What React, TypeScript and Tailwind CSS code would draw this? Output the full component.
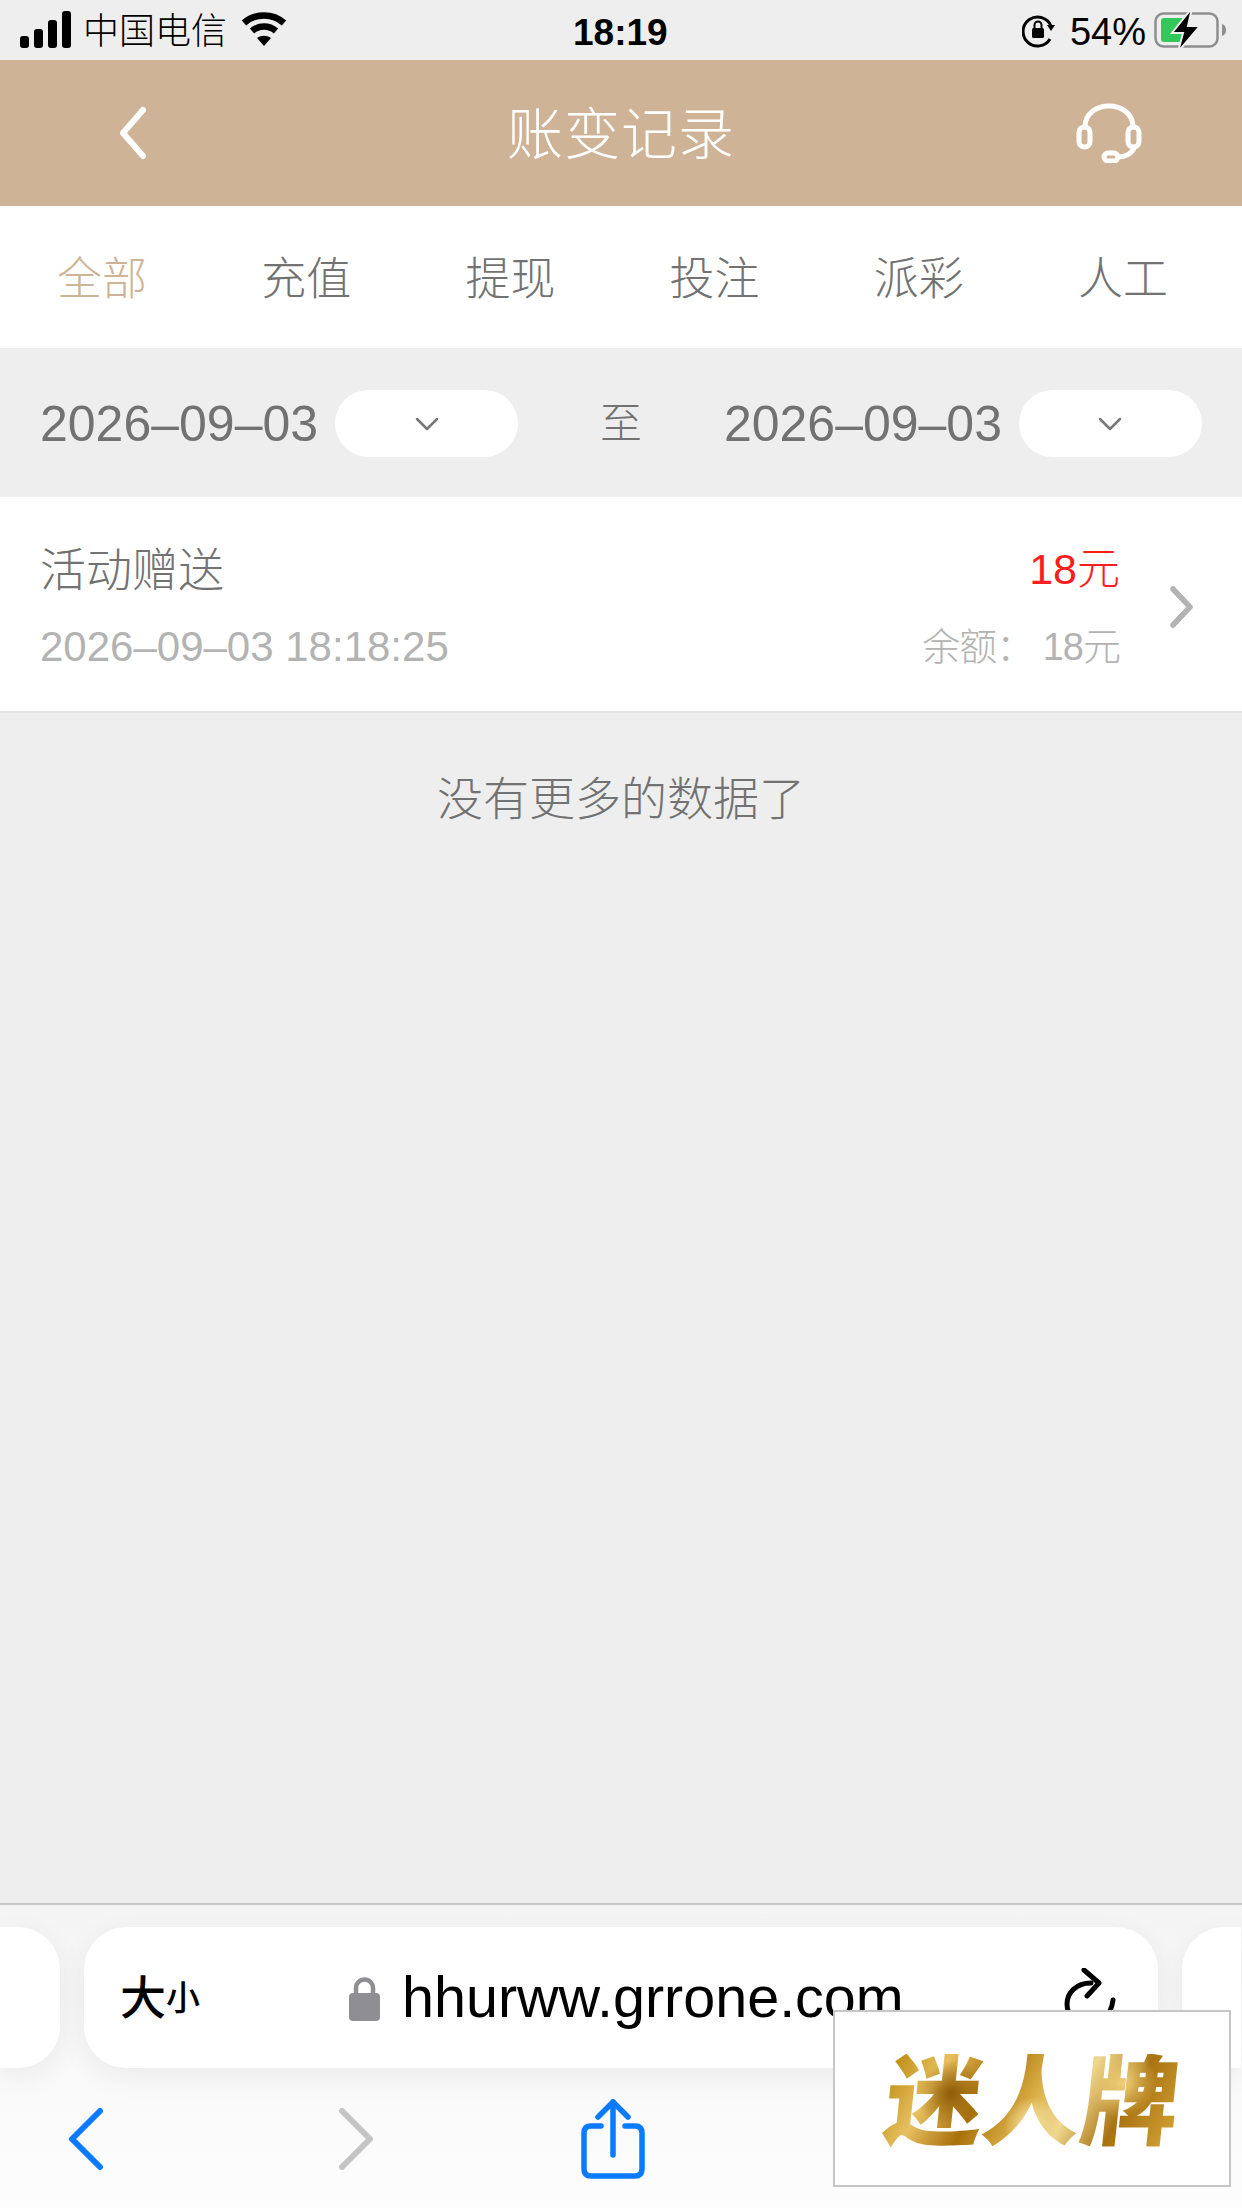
const tabs = ['全部', '充值', '提现', '投注', '派彩', '人工']

function Signal() {
  return (
    <svg width="52" height="40" viewBox="0 0 52 40" fill="#000">
      <rect x="0" y="26" width="9" height="12" rx="3" />
      <rect x="14" y="19" width="9" height="19" rx="3" />
      <rect x="28" y="10" width="9" height="28" rx="3" />
      <rect x="42" y="1" width="9" height="37" rx="3" />
    </svg>
  )
}

function Wifi() {
  return (
    <svg width="46" height="40" viewBox="0 0 46 40" fill="none" stroke="#000" strokeWidth="6.5">
      <path d="M3 13 C14 3 32 3 43 13" />
      <path d="M11 21 C18 15 28 15 35 21" />
      <path d="M23 36 L16 28 C20 25 26 25 30 28 Z" fill="#000" stroke="none" />
    </svg>
  )
}

function RotationLock() {
  return (
    <svg width="34" height="36" viewBox="0 0 34 36" fill="none" stroke="#000" strokeWidth="3">
      <path d="M29 14 A14.5 14.5 0 1 0 28 27" />
      <path d="M25 13 L33 13 L29 19 Z" fill="#000" stroke="none" />
      <rect x="10" y="16" width="12" height="10" rx="1.5" fill="#000" stroke="none" />
      <path d="M12.5 16 V13 A3.5 3.5 0 0 1 19.5 13 V16" strokeWidth="2" />
    </svg>
  )
}

function Battery() {
  return (
    <svg width="74" height="44" viewBox="0 0 74 44" fill="none">
      <rect x="1.5" y="5.5" width="62" height="33" rx="8" stroke="#8e8e8e" strokeWidth="2.5" />
      <path d="M68 16 C71 17 72 19 72 22 C72 25 71 27 68 28 Z" fill="#8e8e8e" />
      <path d="M7 13 Q7 10 10 10 H34 L26 34 H10 Q7 34 7 31 Z" fill="#34c759" />
      <path d="M38 0 L18 25 H29 L24 44 L46 18 H34 Z" fill="#000" stroke="#efefef" strokeWidth="2" />
    </svg>
  )
}

function Headset() {
  return (
    <svg width="66" height="60" viewBox="0 0 66 60" fill="none" stroke="#fff" strokeWidth="5" strokeLinecap="round">
      <path d="M9 24 C9 -4 57 -4 57 24" />
      <rect x="3" y="24" width="11" height="20" rx="5.5" />
      <rect x="52" y="24" width="11" height="20" rx="5.5" />
      <path d="M58 45 C56 50 50 54 42 54" />
      <rect x="28" y="50" width="14" height="8" rx="4" />
    </svg>
  )
}

function Chevron({ d, color, w, h, sw }: { d: string; color: string; w: number; h: number; sw: number }) {
  return (
    <svg width={w} height={h} viewBox={`0 0 ${w} ${h}`} fill="none" stroke={color} strokeWidth={sw} strokeLinecap="round" strokeLinejoin="round">
      <path d={d} />
    </svg>
  )
}

function DateSelect() {
  return (
    <div className="flex items-center gap-[17px]">
      <span className="text-[50px] leading-none text-[#727272]">2026–09–03</span>
      <div className="flex h-[67px] w-[183px] items-center justify-center rounded-[34px] bg-white">
        <Chevron d="M2 2 L12 12 L22 2" color="#777" w={24} h={14} sw={2.5} />
      </div>
    </div>
  )
}

export default function App() {
  return (
    <div className="relative flex h-[2208px] w-[1242px] flex-col overflow-hidden bg-[#eeeeee] font-['Liberation_Sans','Noto_Sans_CJK_SC',sans-serif]">
      {/* ios status bar */}
      <div className="relative flex h-[60px] items-center justify-between pl-[20px] pr-[14px] text-black">
        <div className="flex items-center">
          <Signal />
          <span className="ml-[11px] pt-[3px] text-[36px] font-light leading-none">中国电信</span>
          <span className="ml-[14px]"><Wifi /></span>
        </div>
        <span className="absolute left-[573px] top-[14px] text-[37px] font-bold leading-none">18:19</span>
        <div className="flex items-center">
          <RotationLock />
          <span className="ml-[14px] pt-[3px] text-[38px] leading-none">54%</span>
          <span className="ml-[8px]"><Battery /></span>
        </div>
      </div>

      {/* title bar */}
      <div className="flex h-[146px] items-center justify-between bg-[#cfb396] pl-[118px] pr-[100px]">
        <div className="w-[48px]">
          <Chevron d="M25 4 L5 27 L25 50" color="#fff" w={30} h={54} sw={6} />
        </div>
        <span className="pt-[4px] text-[56px] font-light leading-none tracking-[1px] text-white">账变记录</span>
        <Headset />
      </div>

      {/* tabs */}
      <div className="grid h-[142px] grid-cols-6 items-center bg-white pr-[17px] pt-[6px]">
        {tabs.map((t, i) => (
          <div key={t} className={i === 0 ? 'text-center text-[45px] font-light text-[#cfb396]' : 'text-center text-[45px] font-light text-[#727272]'}>
            {t}
          </div>
        ))}
      </div>

      {/* date filter */}
      <div className="flex h-[149px] items-center justify-between px-[40px] pt-[2px]">
        <DateSelect />
        <span className="text-[42px] font-light text-[#727272]">至</span>
        <DateSelect />
      </div>

      {/* record row */}
      <div className="flex h-[216px] items-center border-b-2 border-[#e4e4e4] bg-white pl-[40px] pr-[48px] pt-[6px]">
        <div className="flex flex-1 flex-col gap-[33px]">
          <div className="flex items-center justify-between">
            <span className="text-[46px] font-light leading-none text-[#727272]">活动赠送</span>
            <span className="text-[43px] font-light leading-none text-[#fa1e1e]">18元</span>
          </div>
          <div className="flex items-center justify-between">
            <span className="text-[42px] leading-none text-[#b3b3b3]">2026–09–03 18:18:25</span>
            <span className="text-[38px] font-light leading-none tracking-[-1px] text-[#b3b3b3]">余额： 18元</span>
          </div>
        </div>
        <div className="ml-[50px]">
          <Chevron d="M3 3 L20 21 L3 39" color="#b3b3b3" w={24} h={42} sw={5.5} />
        </div>
      </div>

      <div className="mt-[63px] text-center text-[46px] font-light leading-none text-[#727272]">没有更多的数据了</div>

      <div className="flex-1" />

      {/* safari bottom bar */}
      <div className="h-[305px] border-t-2 border-[#c8c8c8] bg-gradient-to-b from-[#f4f4f4] to-[#fdfdfd]">
        <div className="mt-[22px] flex h-[141px] gap-[24px]">
          <div className="w-[60px] shrink-0 rounded-r-[42px] bg-white shadow-[0_8px_30px_rgba(0,0,0,0.06)]" />
          <div className="relative flex w-[1074px] shrink-0 items-center rounded-[42px] bg-white pl-[36px] shadow-[0_8px_30px_rgba(0,0,0,0.06)]">
            <span className="text-[46px] font-medium leading-none text-black">大</span>
            <span className="text-[34px] font-medium leading-none text-black">小</span>
            <span className="ml-[149px]">
              <svg width="31" height="46" viewBox="0 0 31 46" fill="none">
                <path d="M7 20 V13 A8.5 8.5 0 0 1 24 13 V20" stroke="#8e8e93" strokeWidth="4.5" />
                <rect x="0" y="18" width="31" height="28" rx="4" fill="#8e8e93" />
              </svg>
            </span>
            <span className="ml-[22px] text-[57.5px] leading-none text-black">hhurww.grrone.com</span>
            <span className="ml-[160px]">
              <svg width="52" height="60" viewBox="0 0 52 60" fill="none" stroke="#000" strokeWidth="5" strokeLinecap="round" strokeLinejoin="round">
                <path d="M27 15 C12 15 3 25 3 36 C3 48 13 57 25 57 C37 57 47 48 49 32" />
                <path d="M20 2 L35 15 L23 28" />
              </svg>
            </span>
          </div>
          <div className="w-[59px] shrink-0 rounded-l-[42px] bg-white shadow-[0_8px_30px_rgba(0,0,0,0.06)]" />
        </div>
        <div className="mt-[29px] flex h-[84px] items-center pl-[68px]">
          <Chevron d="M32 3 L4 31 L32 59" color="#0a7aff" w={36} h={62} sw={6} />
          <span className="ml-[234px]">
            <Chevron d="M4 3 L32 31 L4 59" color="#c4c4c4" w={36} h={62} sw={6} />
          </span>
          <span className="ml-[207px]">
            <svg width="64" height="80" viewBox="0 0 64 80" fill="none" stroke="#0a7aff" strokeWidth="5.5" strokeLinecap="round" strokeLinejoin="round">
              <path d="M32 3 V56" />
              <path d="M17 18 L32 3 L47 18" />
              <path d="M20 27 H10 Q3 27 3 34 V70 Q3 77 10 77 H54 Q61 77 61 70 V34 Q61 27 54 27 H44" />
            </svg>
          </span>
        </div>
      </div>

      {/* watermark over the toolbar */}
      <div className="absolute left-[833px] top-[2010px] flex h-[177px] w-[398px] items-center justify-center border-2 border-[#c6c6c6] bg-white pt-[8px]">
        <span className="-skew-x-6 bg-[radial-gradient(circle_at_22%_40%,#8f5c05_0,transparent_14%),radial-gradient(circle_at_50%_70%,#f5e2a0_0,transparent_16%),radial-gradient(circle_at_80%_30%,#f0d078_0,transparent_14%),linear-gradient(115deg,#b8860b_0%,#e8c060_18%,#a8700a_34%,#dcb048_50%,#f0d890_62%,#a87210_78%,#d8a838_100%)] bg-clip-text text-[98px] font-black leading-none text-transparent">
          迷人牌
        </span>
      </div>
    </div>
  )
}
